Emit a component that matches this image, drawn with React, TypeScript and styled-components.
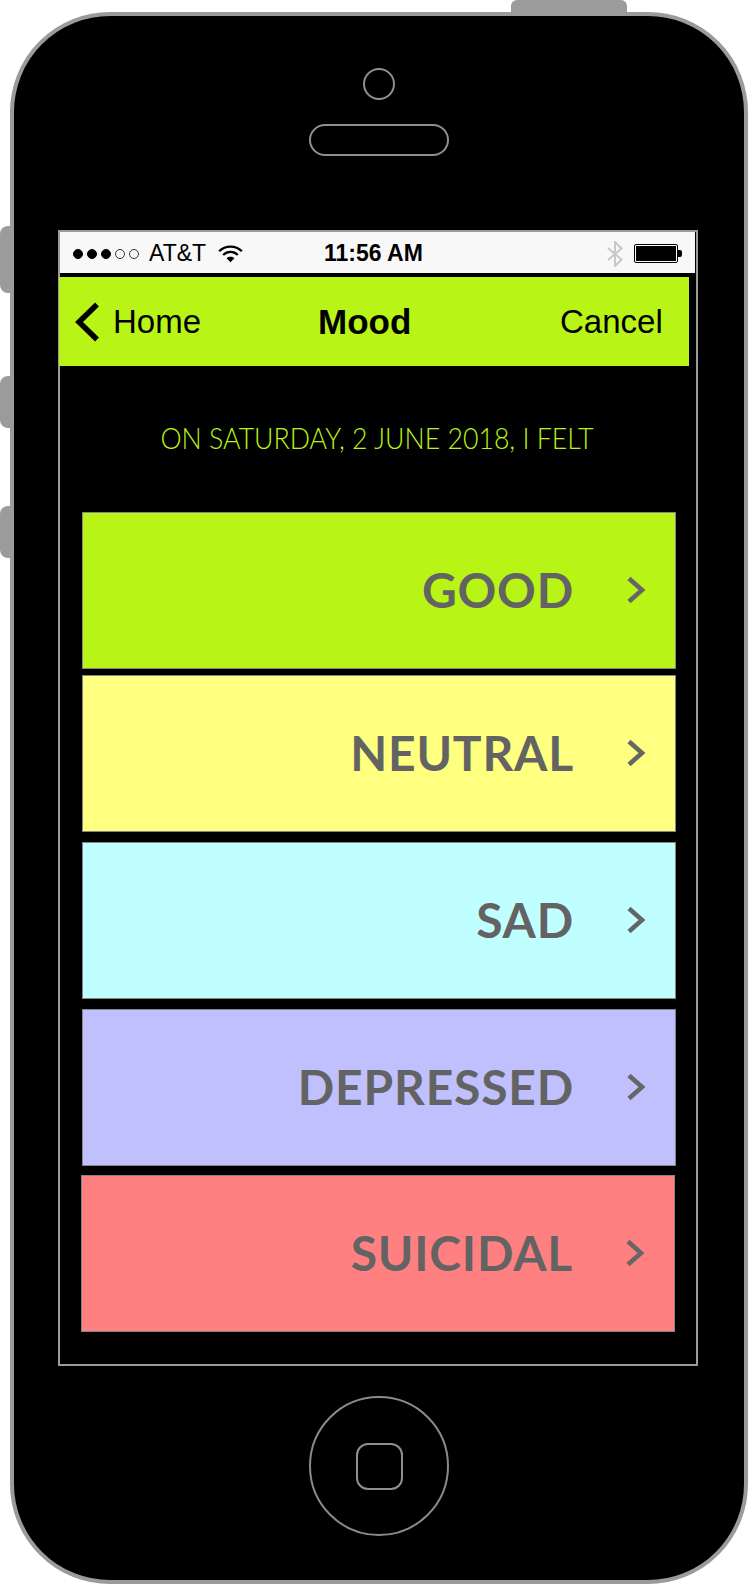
import React from 'react';
import styled, { createGlobalStyle } from 'styled-components';

const LIME = '#b8f516';
const FRAME = '#9b9b9b';

const GlobalStyle = createGlobalStyle`
  html, body {
    margin: 0;
    padding: 0;
    background: #fff;
  }
`;

const Page = styled.div`
  position: relative;
  width: 749px;
  height: 1585px;
  padding: 12px 1px 0 10px;
  box-sizing: border-box;
  overflow: hidden;
`;

const TopButton = styled.div`
  position: absolute;
  left: 511px;
  top: 0;
  width: 116px;
  height: 13px;
  background: ${FRAME};
  border-radius: 6px 6px 0 0;
`;

const SideButton = styled.div<{ $top: number; $height: number }>`
  position: absolute;
  left: 0;
  top: ${(p) => p.$top}px;
  width: 11px;
  height: ${(p) => p.$height}px;
  background: ${FRAME};
  border-radius: 8px 0 0 8px;
`;

const Body = styled.div`
  width: 738px;
  height: 1572px;
  box-sizing: border-box;
  background: #000;
  border: 4px solid ${FRAME};
  border-radius: 100px;
  display: flex;
  flex-direction: column;
  align-items: center;
`;

const Camera = styled.div`
  width: 32px;
  height: 32px;
  margin-top: 52px;
  box-sizing: border-box;
  border: 2px solid #8f8f8f;
  border-radius: 50%;
`;

const Speaker = styled.div`
  width: 140px;
  height: 32px;
  margin-top: 24px;
  box-sizing: border-box;
  border: 2px solid #8f8f8f;
  border-radius: 16px;
`;

const Screen = styled.div`
  width: 640px;
  height: 1136px;
  margin: 74px 2px 0 0;
  box-sizing: border-box;
  border: 2px solid ${FRAME};
  display: flex;
  flex-direction: column;
`;

const StatusBar = styled.div`
  width: 635px;
  height: 41px;
  padding-top: 2px;
  box-sizing: border-box;
  flex: none;
  background: #f8f8f8;
  color: #000;
  display: flex;
  align-items: center;
  font-family: 'Liberation Sans', Arial, sans-serif;
`;

const Signal = styled.div`
  display: flex;
  gap: 4px;
  margin-left: 13px;
`;

const Dot = styled.span<{ $on?: boolean }>`
  width: 10px;
  height: 10px;
  box-sizing: border-box;
  border-radius: 50%;
  border: 1px solid ${(p) => (p.$on ? '#000' : '#333')};
  background: ${(p) => (p.$on ? '#000' : 'transparent')};
`;

const Carrier = styled.span`
  font-size: 23px;
  width: 69px;
  margin-left: 10px;
`;

const Clock = styled.span`
  font-size: 23px;
  font-weight: 700;
  margin-left: 81px;
  width: 283px;
`;

const Navbar = styled.div`
  width: 630px;
  height: 89px;
  margin: 4px 0 0 -1px;
  flex: none;
  background: ${LIME};
  color: #000;
  display: flex;
  align-items: center;
  font-family: 'Liberation Sans', Arial, sans-serif;
  font-size: 33px;
`;

const BackLink = styled.div`
  width: 244px;
  margin-left: 15px;
  display: flex;
  align-items: center;
  gap: 14px;
`;

const Title = styled.div`
  width: 242px;
  font-size: 35px;
  font-weight: 700;
`;

const DateLine = styled.div`
  margin: 54px 0 0 2px;
  height: 34px;
  line-height: 34px;
  width: 630px;
  text-align: center;
  color: ${LIME};
  font-family: Lato, sans-serif;
  font-weight: 300;
  font-size: 30px;
  white-space: nowrap;
  transform: scaleX(0.89);
`;

const MoodList = styled.div`
  margin-top: 58px;
  display: flex;
  flex-direction: column;
`;

const MoodRow = styled.div<{ $bg: string; $gap: number; $shift?: number }>`
  width: 594px;
  height: 157px;
  margin-top: ${(p) => p.$gap}px;
  margin-left: ${(p) => 22 - (p.$shift || 0)}px;
  box-sizing: border-box;
  background: ${(p) => p.$bg};
  border: 1px solid #858585;
  display: flex;
  align-items: center;
  justify-content: flex-end;
  padding: 0 29px 2px 0;
`;

const MoodLabel = styled.span`
  color: #636363;
  font-family: Lato, sans-serif;
  font-weight: 700;
  font-size: 48px;
  letter-spacing: 0.8px;
  line-height: 1;
  margin-right: 52px;
`;

const HomeButton = styled.div`
  width: 140px;
  height: 140px;
  margin-top: 30px;
  box-sizing: border-box;
  border: 2px solid #8a8a8a;
  border-radius: 50%;
  display: flex;
  align-items: center;
  justify-content: center;
`;

const HomeSquare = styled.div`
  width: 47px;
  height: 47px;
  box-sizing: border-box;
  border: 2px solid #8f8f8f;
  border-radius: 12px;
`;

const BatteryShell = styled.div`
  width: 44px;
  height: 19px;
  margin-left: 11px;
  box-sizing: border-box;
  border: 1px solid #000;
  border-radius: 2px;
  padding: 1px;
  background: #fff;
  position: relative;
  &::after {
    content: '';
    position: absolute;
    right: -5px;
    top: 5px;
    width: 4px;
    height: 7px;
    background: #000;
    border-radius: 0 2px 2px 0;
  }
`;

const BatteryFill = styled.div`
  height: 100%;
  background: #000;
`;

const WifiIcon = () => (
  <svg width="25" height="19" viewBox="0 0 26 19" fill="none" stroke="#000" strokeWidth="2.4">
    <path d="M1.2 7.2C7.8 .6 18.2 .6 24.8 7.2" />
    <path d="M5.4 11C9.6 6.8 16.4 6.8 20.6 11" />
    <path d="M13 18.6 8.9 14.4C11.2 12.4 14.8 12.4 17.1 14.4Z" fill="#000" stroke="none" />
  </svg>
);

const BluetoothIcon = () => (
  <svg width="16" height="26" viewBox="0 0 16 26" fill="none" stroke="#c8c8c8" strokeWidth="2">
    <path d="M1 7 14.5 18.5 8 25V1L14.5 7.5 1 19" />
  </svg>
);

const BackChevron = () => (
  <svg width="25" height="40" viewBox="0 0 25 40" fill="none" stroke="#000" strokeWidth="5.5">
    <path d="M23 2.5 5 20 23 37.5" />
  </svg>
);

const RowChevron = () => (
  <svg width="20" height="28" viewBox="0 0 20 28" fill="none" stroke="#666" strokeWidth="4.6">
    <path d="M3 2.5 16 14 3 25.5" />
  </svg>
);

const moods = [
  { label: 'GOOD', bg: LIME, gap: 0 },
  { label: 'NEUTRAL', bg: '#ffff80', gap: 6 },
  { label: 'SAD', bg: '#c0ffff', gap: 10 },
  { label: 'DEPRESSED', bg: '#c0c0ff', gap: 10 },
  { label: 'SUICIDAL', bg: '#ff8080', gap: 9, shift: 1 },
];

const App: React.FC = () => {
  return (
    <Page>
      <GlobalStyle />
      <TopButton />
      <SideButton $top={226} $height={67} />
      <SideButton $top={376} $height={52} />
      <SideButton $top={506} $height={52} />
      <Body>
        <Camera />
        <Speaker />
        <Screen>
          <StatusBar>
            <Signal>
              <Dot $on />
              <Dot $on />
              <Dot $on />
              <Dot />
              <Dot />
            </Signal>
            <Carrier>AT&amp;T</Carrier>
            <WifiIcon />
            <Clock>11:56 AM</Clock>
            <BluetoothIcon />
            <BatteryShell>
              <BatteryFill />
            </BatteryShell>
          </StatusBar>
          <Navbar>
            <BackLink>
              <BackChevron />
              <span>Home</span>
            </BackLink>
            <Title>Mood</Title>
            <span>Cancel</span>
          </Navbar>
          <DateLine>ON SATURDAY, 2 JUNE 2018, I FELT</DateLine>
          <MoodList>
            {moods.map((m) => (
              <MoodRow key={m.label} $bg={m.bg} $gap={m.gap} $shift={m.shift}>
                <MoodLabel>{m.label}</MoodLabel>
                <RowChevron />
              </MoodRow>
            ))}
          </MoodList>
        </Screen>
        <HomeButton>
          <HomeSquare />
        </HomeButton>
      </Body>
    </Page>
  );
};

export default App;
